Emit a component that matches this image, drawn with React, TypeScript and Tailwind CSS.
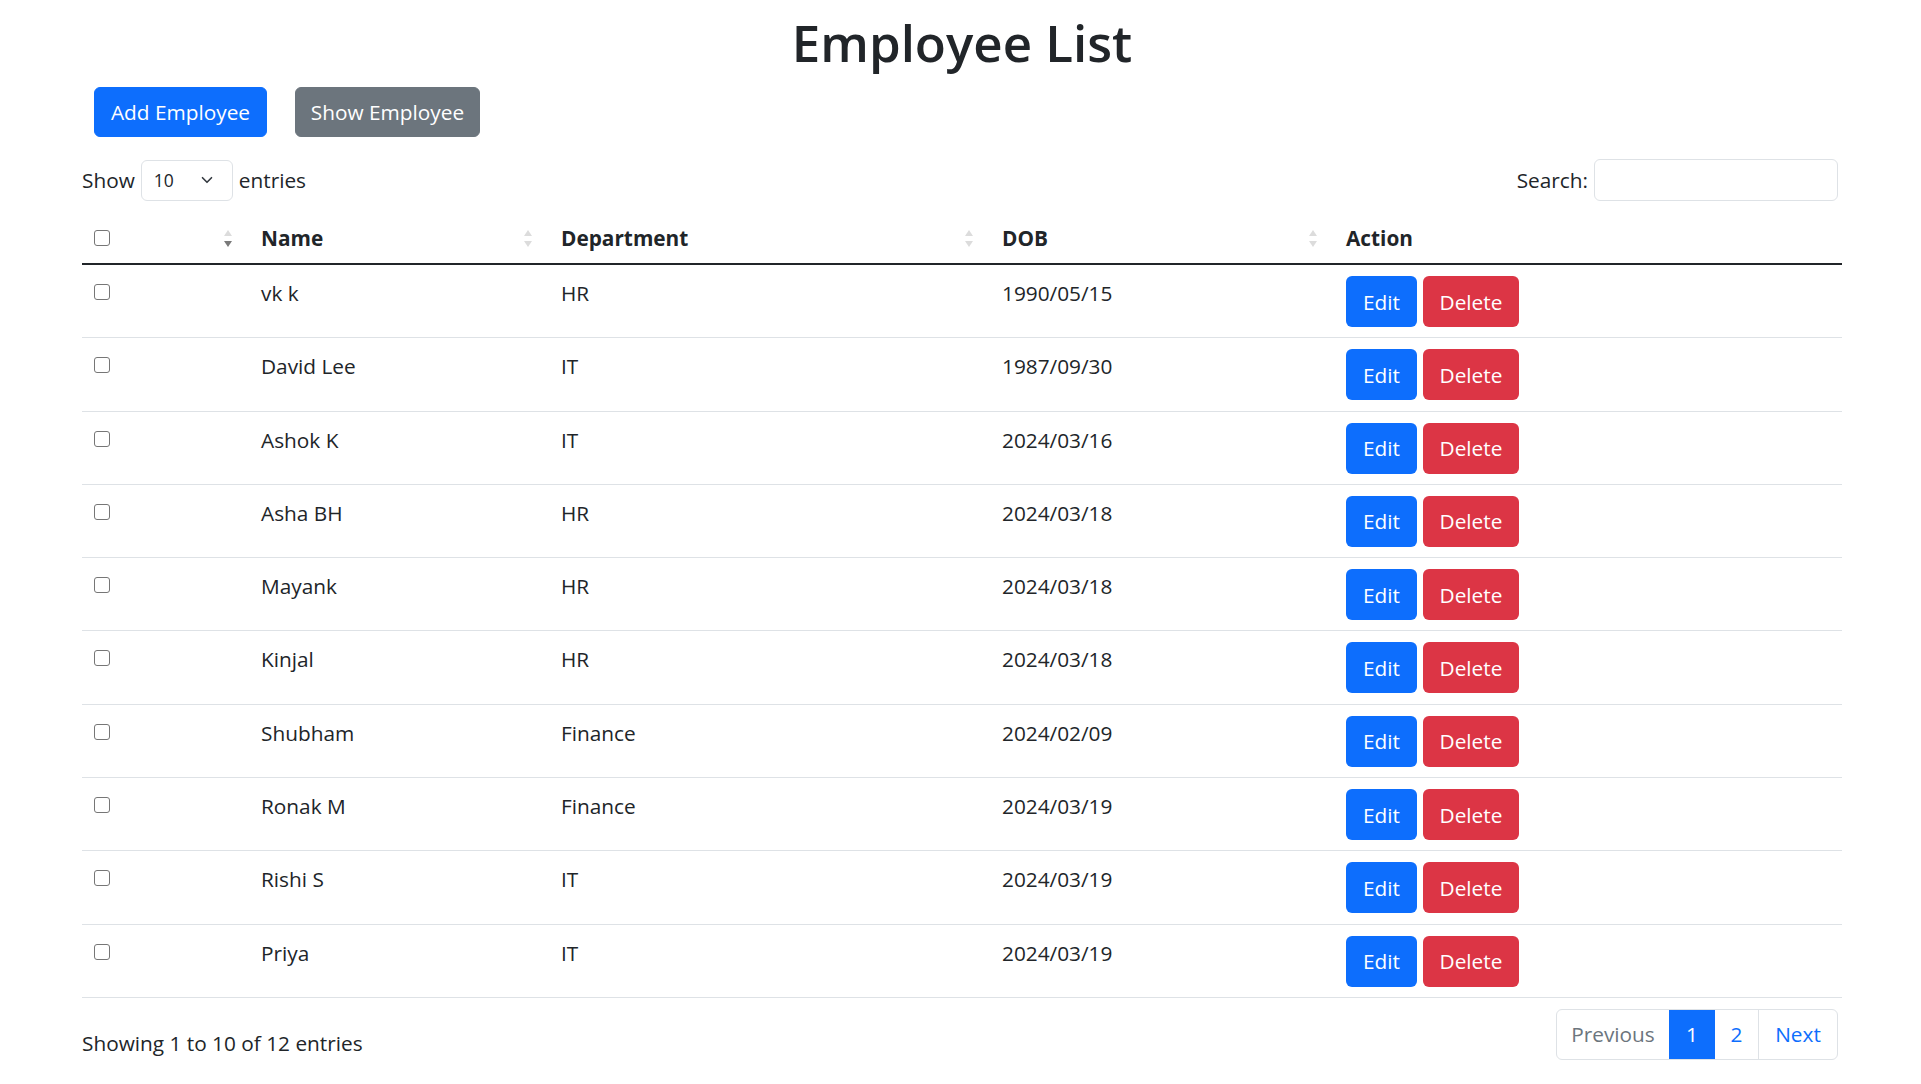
import { ChevronDown } from "lucide-react"

type Employee = {
  name: string
  department: string
  dob: string
}

const employees: Employee[] = [
  { name: "vk k", department: "HR", dob: "1990/05/15" },
  { name: "David Lee", department: "IT", dob: "1987/09/30" },
  { name: "Ashok K", department: "IT", dob: "2024/03/16" },
  { name: "Asha BH", department: "HR", dob: "2024/03/18" },
  { name: "Mayank", department: "HR", dob: "2024/03/18" },
  { name: "Kinjal", department: "HR", dob: "2024/03/18" },
  { name: "Shubham", department: "Finance", dob: "2024/02/09" },
  { name: "Ronak M", department: "Finance", dob: "2024/03/19" },
  { name: "Rishi S", department: "IT", dob: "2024/03/19" },
  { name: "Priya", department: "IT", dob: "2024/03/19" },
]

function SortArrows({ active = false }: { active?: boolean }) {
  return (
    <span className="flex flex-col items-center gap-[5px] mr-[9px]">
      <span className="w-0 h-0 border-x-[4px] border-x-transparent border-b-[6px] border-b-[#dcdcdc]" />
      <span
        className={`w-0 h-0 border-x-[4px] border-x-transparent border-t-[6px] ${
          active ? "border-t-[#7a7a7a]" : "border-t-[#dcdcdc]"
        }`}
      />
    </span>
  )
}

function Checkbox() {
  return (
    <span className="block w-4 h-4 ml-[2px] rounded-[3px] border border-[#767676] bg-white" />
  )
}

export default function App() {
  return (
    <div className="min-h-screen bg-white text-[#212529] font-['Open_Sans','Noto_Sans',sans-serif] text-[20.8px] leading-[30px]">
      <div className="w-[1760px] ml-[82px]">
        {/* Title */}
        <h1 className="pt-[12px] text-center text-[51px] leading-[60px] font-semibold">Employee List</h1>

        {/* Top buttons */}
        <div className="flex gap-[28px] ml-[12px] mt-[15px]">
          <button className="h-[50px] w-[173px] rounded-[6px] bg-[#0d6efd] text-white border border-[#0d6efd]">
            Add Employee
          </button>
          <button className="h-[50px] w-[185px] rounded-[6px] bg-[#6c757d] text-white border border-[#6c757d]">
            Show Employee
          </button>
        </div>

        {/* Length + search */}
        <div className="flex items-center justify-between mt-[22px] pr-[4px]">
          <div className="flex items-center gap-[6px]">
            <span>Show</span>
            <div className="w-[92px] h-[41px] border border-[#dee2e6] rounded-[6px] flex items-center justify-between pl-[12px] pr-[16px] text-[17.5px]">
              <span>10</span>
              <ChevronDown className="w-[18px] h-[18px] text-[#343a40]" strokeWidth={2.2} />
            </div>
            <span>entries</span>
          </div>
          <div className="flex items-center gap-[6px]">
            <span>Search:</span>
            <div className="w-[244px] h-[42px] border border-[#dee2e6] rounded-[6px] bg-white" />
          </div>
        </div>

        {/* Table */}
        <table className="w-full table-fixed border-collapse mt-[12px]">
          <colgroup>
            <col className="w-[169px]" />
            <col className="w-[300px]" />
            <col className="w-[441px]" />
            <col className="w-[344px]" />
            <col className="w-[506px]" />
          </colgroup>
          <thead>
            <tr className="border-b-2 border-[#212529]">
              <th className="px-[10px] py-[10px] text-left font-bold">
                <div className="flex items-center justify-between">
                  <Checkbox />
                  <SortArrows active />
                </div>
              </th>
              <th className="px-[10px] py-[10px] text-left font-bold">
                <div className="flex items-center justify-between">
                  <span>Name</span>
                  <SortArrows />
                </div>
              </th>
              <th className="px-[10px] py-[10px] text-left font-bold">
                <div className="flex items-center justify-between">
                  <span>Department</span>
                  <SortArrows />
                </div>
              </th>
              <th className="px-[10px] py-[10px] text-left font-bold">
                <div className="flex items-center justify-between">
                  <span>DOB</span>
                  <SortArrows />
                </div>
              </th>
              <th className="px-[10px] py-[10px] text-left font-bold">Action</th>
            </tr>
          </thead>
          <tbody>
            {employees.map((emp) => (
              <tr key={emp.name} className="border-b border-[#dee2e6] align-top">
                <td className="px-[10px] pt-[19px] pb-[11px]">
                  <Checkbox />
                </td>
                <td className="px-[10px] pt-[13px] pb-[11px]">{emp.name}</td>
                <td className="px-[10px] pt-[13px] pb-[11px]">{emp.department}</td>
                <td className="px-[10px] pt-[13px] pb-[11px]">{emp.dob}</td>
                <td className="px-[10px] pt-[11px] pb-[10.3px]">
                  <div className="flex gap-[6px]">
                    <button className="h-[51px] w-[71px] rounded-[6px] bg-[#0d6efd] text-white">Edit</button>
                    <button className="h-[51px] w-[96px] rounded-[6px] bg-[#dc3545] text-white">Delete</button>
                  </div>
                </td>
              </tr>
            ))}
          </tbody>
        </table>

        {/* Footer */}
        <div className="flex justify-between items-start mt-[11px] pr-[4px]">
          <div className="pt-[19px]">Showing 1 to 10 of 12 entries</div>
          <div className="flex h-[51px] border border-[#dee2e6] rounded-[6px] overflow-hidden">
            <span className="w-[112px] flex items-center justify-center text-[#6c757d]">Previous</span>
            <span className="w-[46px] flex items-center justify-center bg-[#0d6efd] text-white">1</span>
            <span className="w-[44px] flex items-center justify-center text-[#0d6efd] border-r border-[#dee2e6]">2</span>
            <span className="w-[78px] flex items-center justify-center text-[#0d6efd]">Next</span>
          </div>
        </div>
      </div>
    </div>
  )
}
